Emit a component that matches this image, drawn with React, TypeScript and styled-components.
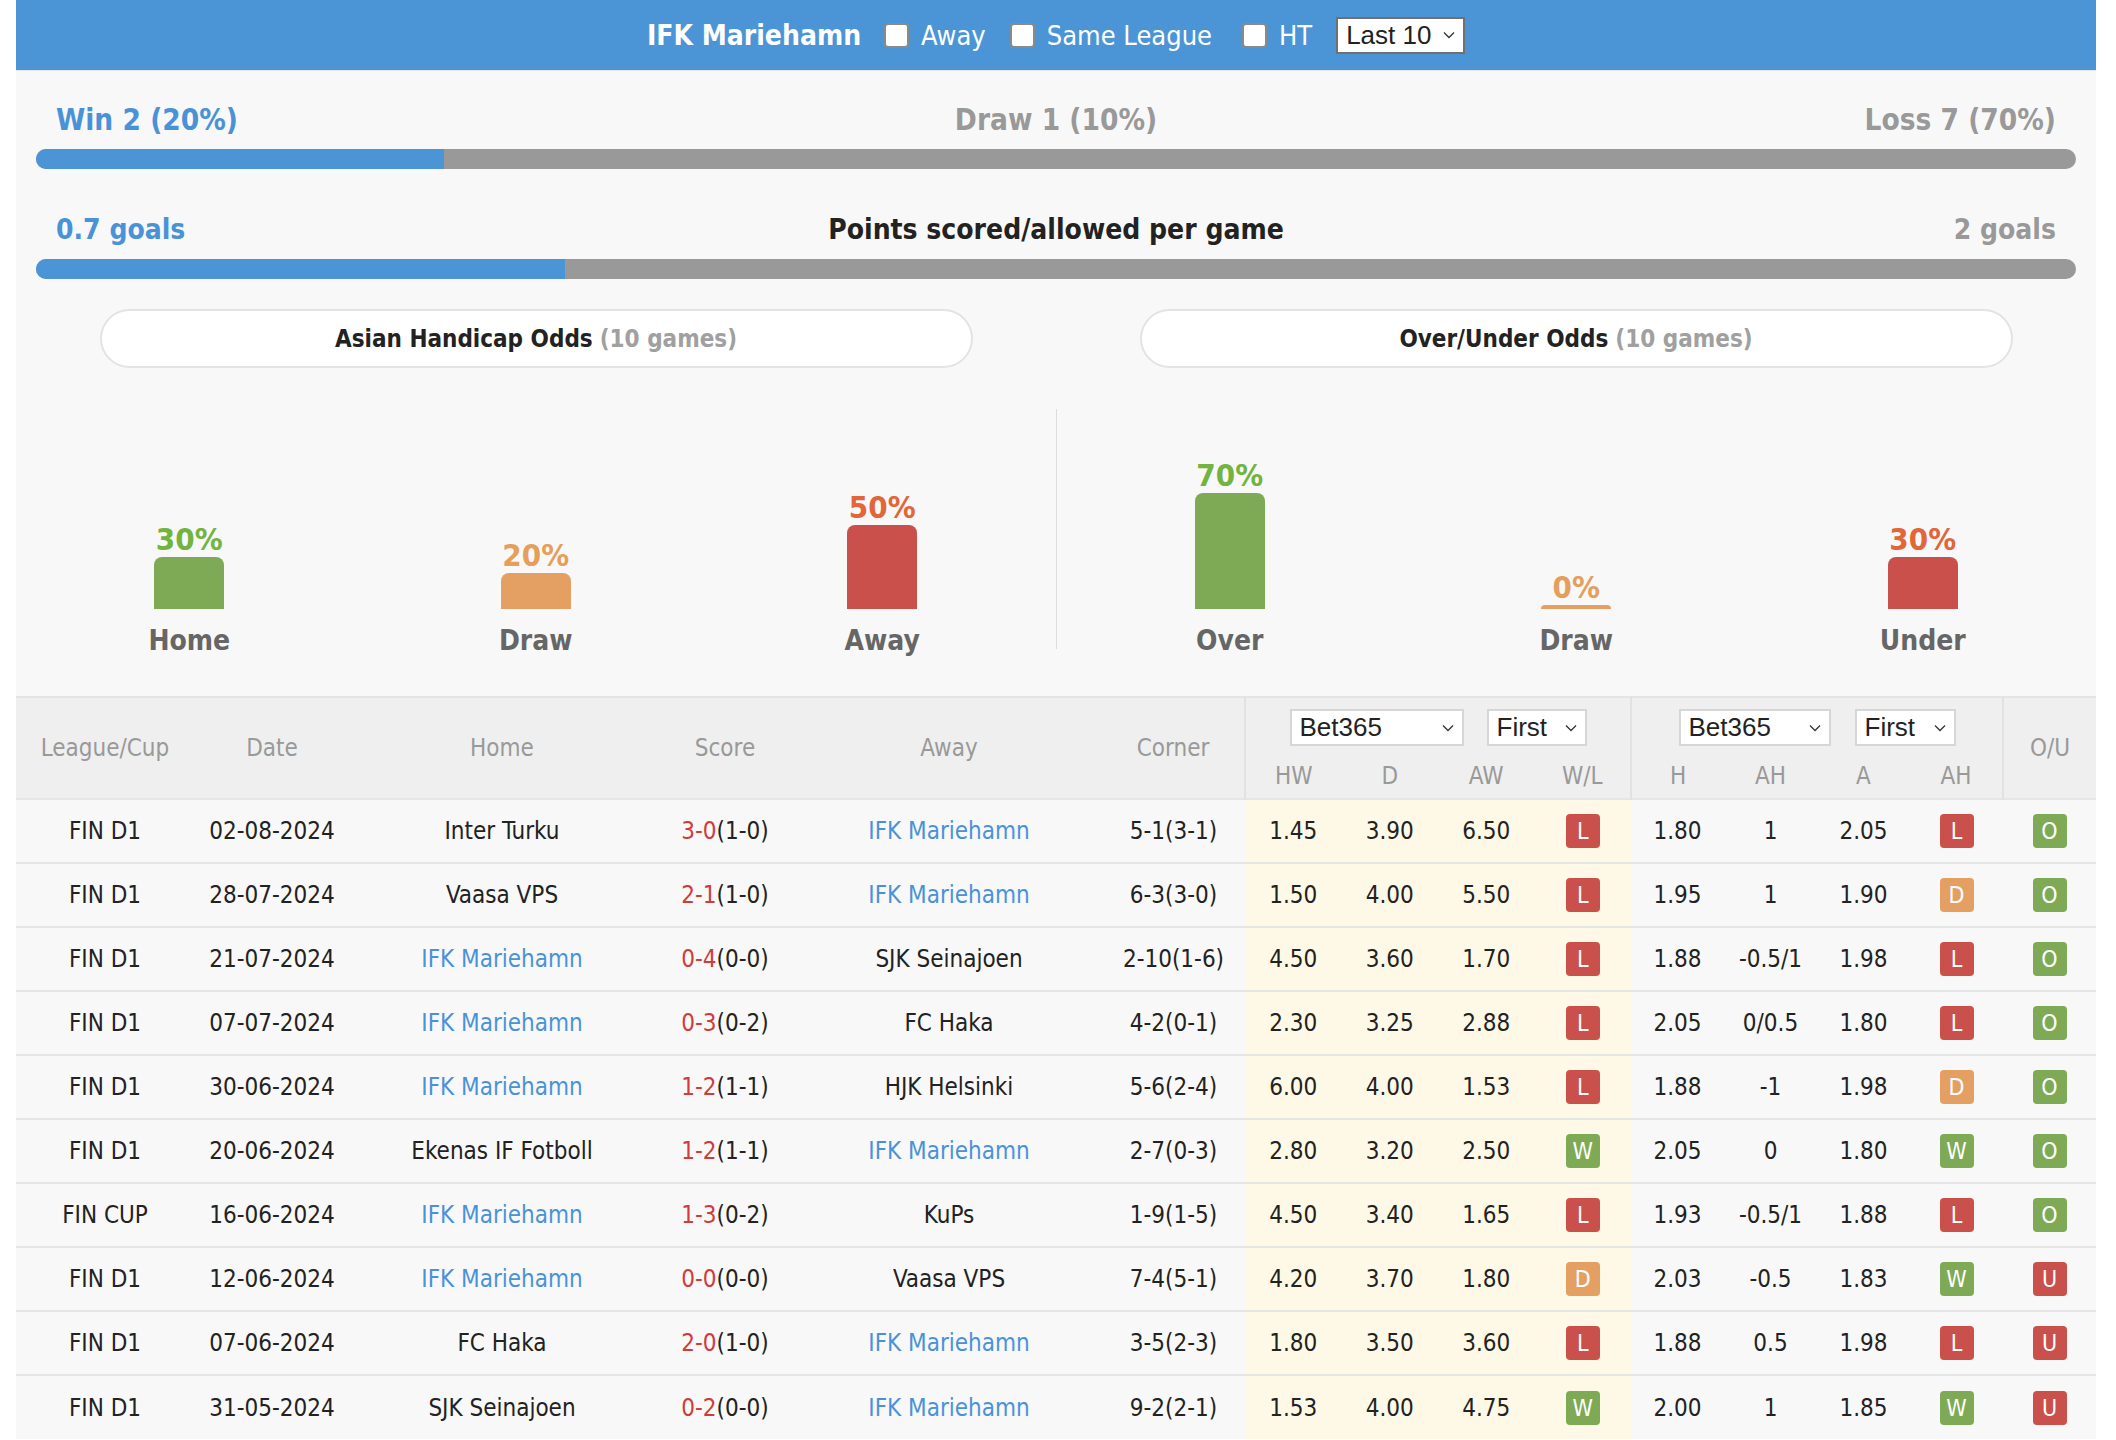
import React from "react";
import styled, { createGlobalStyle } from "styled-components";

const FONT = `"DejaVu Sans Condensed", "DejaVu Sans", sans-serif`;

const GlobalStyle = createGlobalStyle`
  html, body { margin: 0; padding: 0; background: #ffffff; }
  body { font-family: ${FONT}; color: #222; }
  * { box-sizing: border-box; }
`;

const Page = styled.div`
  width: 2080px;
  margin: 0 20px 0 16px;
  background: #f8f8f8;
`;

const TopBar = styled.div`
  height: 71px;
  background: #4b95d6;
  border-bottom: 1px solid #e6e6e6;
  display: flex;
  align-items: center;
  justify-content: center;
  color: #fff;
  font-size: 27px;
`;

const TeamTitle = styled.span`
  font-weight: bold;
  font-size: 28px;
  margin-right: 23px;
`;

const CheckItem = styled.label<{ $mr: number }>`
  display: inline-flex;
  align-items: center;
  gap: 12px;
  margin-right: ${(p) => p.$mr}px;
`;

const CheckBox = styled.span`
  width: 25px;
  height: 25px;
  border-radius: 4px;
  background: #fff;
  border: 2px solid #8a8a8a;
`;

const SelectBox = styled.div<{ $w: number; $dark?: boolean }>`
  width: ${(p) => p.$w}px;
  height: 37px;
  background: #fff;
  border: 2px solid ${(p) => (p.$dark ? "#707070" : "#d6d6d6")};
  display: inline-flex;
  align-items: center;
  justify-content: space-between;
  padding: 0 8px 0 8px;
  font-family: "Liberation Sans", Arial, sans-serif;
  font-size: 26px;
  color: #222;
  font-weight: normal;
`;

const Chevron = () => (
  <svg width="12" height="8" viewBox="0 0 12 8">
    <polyline points="1,1.5 6,6.5 11,1.5" fill="none" stroke="#333" strokeWidth="1.3" />
  </svg>
);

const Select = ({ label, w, dark }: { label: string; w: number; dark?: boolean }) => (
  <SelectBox $w={w} $dark={dark}>
    <span>{label}</span>
    <Chevron />
  </SelectBox>
);

const StatLabels = styled.div<{ $mt: number; $fs: number }>`
  margin-top: ${(p) => p.$mt}px;
  padding: 0 40px;
  display: grid;
  grid-template-columns: 1fr auto 1fr;
  height: 36px;
  line-height: 36px;
  font-size: ${(p) => p.$fs}px;
  font-weight: bold;
  white-space: nowrap;
`;

const StatText = styled.span<{ $c: string; $align: string }>`
  color: ${(p) => p.$c};
  text-align: ${(p) => p.$align};
`;

const Bar = styled.div`
  margin: 11px 20px 0;
  height: 20px;
  border-radius: 10px;
  background: #999;
  overflow: hidden;
  display: flex;
`;

const BarFill = styled.div`
  background: #4b95d6;
  height: 100%;
`;

const PillRow = styled.div`
  margin-top: 30px;
  display: grid;
  grid-template-columns: 1fr 1fr;
`;

const PillCell = styled.div`
  display: flex;
  justify-content: center;
`;

const Pill = styled.div`
  width: 873px;
  height: 59px;
  border: 2px solid #e3e3e3;
  border-radius: 30px;
  background: #fff;
  display: flex;
  align-items: center;
  justify-content: center;
  font-size: 24px;
  font-weight: bold;
  color: #222;
`;

const Muted = styled.span`
  color: #a0a0a0;
  margin-left: 7px;
`;

const ChartArea = styled.div`
  margin-top: 41px;
  padding-bottom: 37px;
  display: flex;
  align-items: flex-start;
`;

const ChartHalf = styled.div`
  flex: 1;
  height: 250px;
  display: grid;
  grid-template-columns: repeat(3, 1fr);
`;

const Divider = styled.div`
  width: 1px;
  height: 240px;
  background: #dddddd;
`;

const ChartCol = styled.div`
  display: flex;
  flex-direction: column;
  align-items: center;
  justify-content: flex-end;
`;

const Pct = styled.div<{ $c: string }>`
  font-size: 31px;
  font-weight: bold;
  line-height: 36px;
  color: ${(p) => p.$c};
`;

const Column = styled.div<{ $h: number; $c: string }>`
  width: 70px;
  height: ${(p) => p.$h}px;
  background: ${(p) => p.$c};
  border-radius: ${(p) => (p.$h < 10 ? "4px 4px 0 0" : "8px 8px 0 0")};
`;

const ChartLabel = styled.div`
  margin-top: 14px;
  font-size: 28px;
  font-weight: bold;
  line-height: 36px;
  color: #666;
`;

const Table = styled.table`
  width: 100%;
  table-layout: fixed;
  border-collapse: collapse;
  font-size: 24px;
  border-top: 2px solid #e4e4e4;
`;

const HeadRow = styled.tr<{ $h: number }>`
  height: ${(p) => p.$h}px;
`;

const Th = styled.th<{ $bl?: boolean }>`
  background: #efefef;
  color: #999;
  font-weight: normal;
  text-align: center;
  vertical-align: middle;
  padding: 0;
  border-left: ${(p) => (p.$bl ? "2px solid #e2e2e2" : "none")};
`;

const SelectGroup = styled.div<{ $gap: number }>`
  display: flex;
  justify-content: center;
  padding-top: 4px;
  gap: ${(p) => p.$gap}px;
`;

const Row = styled.tr`
  height: 64px;
  border-top: 2px solid #e6e6e6;
`;

const Td = styled.td<{ $odds?: boolean }>`
  text-align: center;
  vertical-align: middle;
  padding: 0;
  color: #222;
  background: ${(p) => (p.$odds ? "#fef9e6" : "#f8f8f8")};
  white-space: nowrap;
`;

const Team = styled.span<{ $hl: boolean }>`
  color: ${(p) => (p.$hl ? "#4a92d8" : "#222")};
`;

const ScoreMain = styled.span`
  color: #d03b3b;
`;

const BADGE: Record<string, string> = {
  L: "#c9504b",
  U: "#c9504b",
  D: "#e4a063",
  W: "#7eaa55",
  O: "#7eaa55",
};

const Badge = styled.span<{ $c: string }>`
  display: inline-flex;
  align-items: center;
  justify-content: center;
  width: 34px;
  height: 34px;
  border-radius: 4px;
  background: ${(p) => p.$c};
  color: #fff;
  font-size: 23px;
  vertical-align: middle;
`;

type Match = [string, string, string, string, string, string, string, string, string, string, string, string, string, string, string, string];

const MATCHES: Match[] = [
  ["FIN D1", "02-08-2024", "Inter Turku", "3-0", "(1-0)", "IFK Mariehamn", "5-1(3-1)", "1.45", "3.90", "6.50", "L", "1.80", "1", "2.05", "L", "O"],
  ["FIN D1", "28-07-2024", "Vaasa VPS", "2-1", "(1-0)", "IFK Mariehamn", "6-3(3-0)", "1.50", "4.00", "5.50", "L", "1.95", "1", "1.90", "D", "O"],
  ["FIN D1", "21-07-2024", "IFK Mariehamn", "0-4", "(0-0)", "SJK Seinajoen", "2-10(1-6)", "4.50", "3.60", "1.70", "L", "1.88", "-0.5/1", "1.98", "L", "O"],
  ["FIN D1", "07-07-2024", "IFK Mariehamn", "0-3", "(0-2)", "FC Haka", "4-2(0-1)", "2.30", "3.25", "2.88", "L", "2.05", "0/0.5", "1.80", "L", "O"],
  ["FIN D1", "30-06-2024", "IFK Mariehamn", "1-2", "(1-1)", "HJK Helsinki", "5-6(2-4)", "6.00", "4.00", "1.53", "L", "1.88", "-1", "1.98", "D", "O"],
  ["FIN D1", "20-06-2024", "Ekenas IF Fotboll", "1-2", "(1-1)", "IFK Mariehamn", "2-7(0-3)", "2.80", "3.20", "2.50", "W", "2.05", "0", "1.80", "W", "O"],
  ["FIN CUP", "16-06-2024", "IFK Mariehamn", "1-3", "(0-2)", "KuPs", "1-9(1-5)", "4.50", "3.40", "1.65", "L", "1.93", "-0.5/1", "1.88", "L", "O"],
  ["FIN D1", "12-06-2024", "IFK Mariehamn", "0-0", "(0-0)", "Vaasa VPS", "7-4(5-1)", "4.20", "3.70", "1.80", "D", "2.03", "-0.5", "1.83", "W", "U"],
  ["FIN D1", "07-06-2024", "FC Haka", "2-0", "(1-0)", "IFK Mariehamn", "3-5(2-3)", "1.80", "3.50", "3.60", "L", "1.88", "0.5", "1.98", "L", "U"],
  ["FIN D1", "31-05-2024", "SJK Seinajoen", "0-2", "(0-0)", "IFK Mariehamn", "9-2(2-1)", "1.53", "4.00", "4.75", "W", "2.00", "1", "1.85", "W", "U"],
];

const COLS = [178, 156, 304, 142, 306, 143, 96.5, 96.5, 96.5, 96.5, 93, 93, 93, 93, 93];

const HANDICAP = [
  { pct: 30, label: "Home", text: "#72b43f", bar: "#7eaa55" },
  { pct: 20, label: "Draw", text: "#e59f5d", bar: "#e4a063" },
  { pct: 50, label: "Away", text: "#e1663a", bar: "#c9504b" },
];
const OVERUNDER = [
  { pct: 70, label: "Over", text: "#72b43f", bar: "#7eaa55" },
  { pct: 0, label: "Draw", text: "#e59f5d", bar: "#e4a063" },
  { pct: 30, label: "Under", text: "#e1663a", bar: "#c9504b" },
];

const Chart = ({ items }: { items: typeof HANDICAP }) => (
  <ChartHalf>
    {items.map((it) => (
      <ChartCol key={it.label}>
        <Pct $c={it.text}>{it.pct}%</Pct>
        <Column $h={4 + it.pct * 1.6} $c={it.bar} />
        <ChartLabel>{it.label}</ChartLabel>
      </ChartCol>
    ))}
  </ChartHalf>
);

const TEAM = "IFK Mariehamn";

export default function App() {
  return (
    <Page>
      <GlobalStyle />
      <TopBar>
        <TeamTitle>IFK Mariehamn</TeamTitle>
        <CheckItem $mr={24}>
          <CheckBox />
          Away
        </CheckItem>
        <CheckItem $mr={30}>
          <CheckBox />
          Same League
        </CheckItem>
        <CheckItem $mr={24}>
          <CheckBox />
          HT
        </CheckItem>
        <Select label="Last 10" w={129} dark />
      </TopBar>

      <StatLabels $mt={31} $fs={29.5}>
        <StatText $c="#4a92d8" $align="left">Win 2 (20%)</StatText>
        <StatText $c="#999" $align="center">Draw 1 (10%)</StatText>
        <StatText $c="#999" $align="right">Loss 7 (70%)</StatText>
      </StatLabels>
      <Bar>
        <BarFill style={{ width: "20%" }} />
      </Bar>

      <StatLabels $mt={43} $fs={28}>
        <StatText $c="#4a92d8" $align="left">0.7 goals</StatText>
        <StatText $c="#222" $align="center">Points scored/allowed per game</StatText>
        <StatText $c="#999" $align="right">2 goals</StatText>
      </StatLabels>
      <Bar>
        <BarFill style={{ width: `${(0.7 / 2.7) * 100}%` }} />
      </Bar>

      <PillRow>
        <PillCell>
          <Pill>
            Asian Handicap Odds<Muted>(10 games)</Muted>
          </Pill>
        </PillCell>
        <PillCell>
          <Pill>
            Over/Under Odds<Muted>(10 games)</Muted>
          </Pill>
        </PillCell>
      </PillRow>

      <ChartArea>
        <Chart items={HANDICAP} />
        <Divider />
        <Chart items={OVERUNDER} />
      </ChartArea>

      <Table>
        <colgroup>
          {COLS.map((w, i) => (
            <col key={i} style={{ width: `${w}px` }} />
          ))}
        </colgroup>
        <thead>
          <HeadRow $h={56}>
            <Th rowSpan={2}>League/Cup</Th>
            <Th rowSpan={2}>Date</Th>
            <Th rowSpan={2}>Home</Th>
            <Th rowSpan={2}>Score</Th>
            <Th rowSpan={2}>Away</Th>
            <Th rowSpan={2}>Corner</Th>
            <Th colSpan={4} $bl>
              <SelectGroup $gap={23}>
                <Select label="Bet365" w={174} />
                <Select label="First" w={100} />
              </SelectGroup>
            </Th>
            <Th colSpan={4} $bl>
              <SelectGroup $gap={24}>
                <Select label="Bet365" w={152} />
                <Select label="First" w={101} />
              </SelectGroup>
            </Th>
            <Th rowSpan={2} $bl>
              O/U
            </Th>
          </HeadRow>
          <HeadRow $h={46}>
            <Th $bl>HW</Th>
            <Th>D</Th>
            <Th>AW</Th>
            <Th>W/L</Th>
            <Th $bl>H</Th>
            <Th>AH</Th>
            <Th>A</Th>
            <Th>AH</Th>
          </HeadRow>
        </thead>
        <tbody>
          {MATCHES.map((m, i) => (
            <Row key={i}>
              <Td>{m[0]}</Td>
              <Td>{m[1]}</Td>
              <Td>
                <Team $hl={m[2] === TEAM}>{m[2]}</Team>
              </Td>
              <Td>
                <ScoreMain>{m[3]}</ScoreMain>
                {m[4]}
              </Td>
              <Td>
                <Team $hl={m[5] === TEAM}>{m[5]}</Team>
              </Td>
              <Td>{m[6]}</Td>
              <Td $odds>{m[7]}</Td>
              <Td $odds>{m[8]}</Td>
              <Td $odds>{m[9]}</Td>
              <Td $odds>
                <Badge $c={BADGE[m[10]]}>{m[10]}</Badge>
              </Td>
              <Td>{m[11]}</Td>
              <Td>{m[12]}</Td>
              <Td>{m[13]}</Td>
              <Td>
                <Badge $c={BADGE[m[14]]}>{m[14]}</Badge>
              </Td>
              <Td>
                <Badge $c={BADGE[m[15]]}>{m[15]}</Badge>
              </Td>
            </Row>
          ))}
        </tbody>
      </Table>
    </Page>
  );
}
